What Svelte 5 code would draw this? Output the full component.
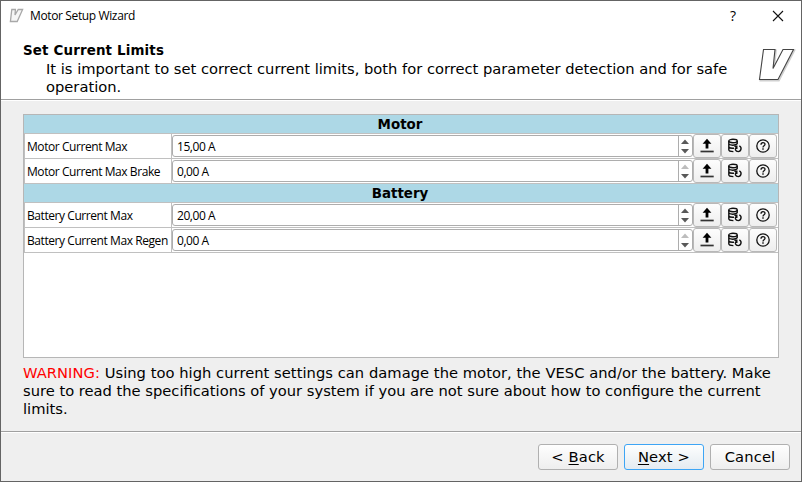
<script>
  const groups = [
    { title: 'Motor', rows: [
      { name: 'Motor Current Max', value: '15,00 A', atMin: false },
      { name: 'Motor Current Max Brake', value: '0,00 A', atMin: true }
    ] },
    { title: 'Battery', rows: [
      { name: 'Battery Current Max', value: '20,00 A', atMin: false },
      { name: 'Battery Current Max Regen', value: '0,00 A', atMin: true }
    ] }
  ];
</script>

<div class="window">
  <header class="titlebar">
    <svg class="mini" width="16" height="16" viewBox="0 0 16 16"><path d="M2.8 1.5H6.4L6 7 9.2 1.5H13.6L8.2 13.5H1.4Z" fill="#f6f6f6" stroke="#a8a8a8" stroke-width="1.3" /></svg>
    <span class="caption">Motor Setup Wizard</span>
    <span class="help">?</span>
    <svg class="close" width="12" height="12" viewBox="0 0 12 12"><path d="M1 1L11 11M11 1L1 11" stroke="#111" stroke-width="1.1" /></svg>
  </header>
  <section class="head">
    <div class="intro">
      <h1>Set Current Limits</h1>
      <p>It is important to set correct current limits, both for correct parameter detection and for safe<br />operation.</p>
    </div>
    <svg class="logo" width="40" height="38" viewBox="0 0 40 38">
      <path d="M6.5 3.5H18L16 22.5 26 3.5H36.5L21 33.5H2.5Z" fill="none" stroke="#d0d0d0" stroke-width="1.8" transform="translate(.9 1)" />
      <path d="M6.5 3.5H18L16 22.5 26 3.5H36.5L21 33.5H2.5Z" fill="#fff" stroke="#444" stroke-width="1.1" />
    </svg>
  </section>
  <main>
    <div class="table">
      {#each groups as g}
        <div class="group">{g.title}</div>
        {#each g.rows as r}
          <div class="row">
            <div class="name">{r.name}</div>
            <div class="spin">
              <span class="value">{r.value}</span>
              <span class="arrows">
                <svg width="14" height="20" viewBox="0 0 14 20">
                  <path d="M3 8L7 3.5 11 8Z" fill={r.atMin ? '#bdbdbd' : '#595959'} />
                  <path d="M3 13L7 17.5 11 13Z" fill="#595959" />
                </svg>
              </span>
            </div>
            <div class="tool"><svg width="16" height="16" viewBox="0 0 16 16"><path d="M8 .8L12.4 5.8H9.4V10.6H6.6V5.8H3.6Z" fill="#000" /><path d="M1.5 13.5H14.7" stroke="#333" stroke-width="1.7" /></svg></div>
            <div class="tool"><svg width="16" height="16" viewBox="0 0 16 16" fill="none" stroke="#111" stroke-width="1.4"><ellipse cx="6" cy="3" rx="4.2" ry="1.7" /><path d="M1.8 3V11.8C1.8 13 3.6 13.6 6.4 13.6M10.2 3V6M1.8 5.8C2.6 7.5 8.5 7.8 10.2 5.8M1.8 8.8C2.6 10.3 5 10.4 7 10.2" /><path d="M12.3 7.8C15.2 9.2 14.3 13.6 11.2 13.6C8.4 13.6 7.5 11 9.2 9.2M7.4 8.3H9.8V11" /></svg></div>
            <div class="tool"><svg width="16" height="16" viewBox="0 0 16 16" fill="none" stroke="#111"><circle cx="8" cy="8" r="6.2" stroke-width="1.3" /><path d="M6 6.7C6 4 10 4.1 10 6.3C10 7.7 8 7.7 8 9.4" stroke-width="1.3" /><path d="M8 10.3V11.7" stroke-width="1.4" /></svg></div>
          </div>
        {/each}
      {/each}
    </div>
    <p class="warning"><span class="first"><em>WARNING:</em> Using too high current settings can damage the motor, the VESC and/or the battery. Make</span><br />sure to read the specifications of your system if you are not sure about how to configure the current<br />limits.</p>
  </main>
  <footer>
    <button>&lt; <u>B</u>ack</button>
    <button class="primary"><u>N</u>ext &gt;</button>
    <button>Cancel</button>
  </footer>
</div>

<style>
  :global(body) { margin: 0; overflow: hidden; }
  .window { box-sizing: border-box; width: 802px; height: 482px; border: 1px solid #646464; background: #efefef; display: flex; flex-direction: column; font: 14.7px/18px "DejaVu Sans", sans-serif; color: #000; white-space: nowrap; }
  .titlebar { height: 30px; background: #fff; display: flex; align-items: center; font: 12px/16px "Open Sans", "Noto Sans", sans-serif; flex: none; }
  .mini { margin-left: 8px; }
  .caption { margin-left: 5px; letter-spacing: -0.37px; }
  .help { margin-left: auto; margin-right: 36px; font-size: 14px; }
  .close { margin-right: 17px; }
  .head { box-sizing: border-box; height: 70px; flex: none; background: #fff; border-bottom: 1px solid #fff; box-shadow: inset 0 -1px #a0a0a0; display: flex; padding: 10px 4px 0 22px; }
  .intro { flex: 1; }
  h1 { font: bold 14.9px/18px "DejaVu Sans Condensed", "DejaVu Sans", sans-serif; font-stretch: condensed; letter-spacing: 0.16px; margin: 0; }
  p { margin: 0; }
  .head p { padding: 1px 0 0 23px; }
  .logo { margin: 5px 0 0; }
  main { flex: 1; padding: 13px 22px 0; }
  .table { box-sizing: border-box; width: 756px; height: 244px; border: 1px solid #b6b6b6; background: #fff; }
  .group { height: 18px; background: #add8e6; border-bottom: 1px solid #c0c0c0; padding-right: 2px; font: bold 14.9px/18px "DejaVu Sans Condensed", "DejaVu Sans", sans-serif; font-stretch: condensed; text-align: center; }
  .row { box-sizing: border-box; height: 25px; border-bottom: 1px solid #c0c0c0; border-left: 1px solid #c0c0c0; display: flex; align-items: center; }
  .name { box-sizing: border-box; width: 147px; height: 24px; border-right: 1px solid #c0c0c0; padding-left: 2px; font: 12px/25px "Open Sans", "Noto Sans", sans-serif; letter-spacing: -0.43px; }
  .spin { box-sizing: border-box; width: 521px; height: 22px; border: 1px solid #adadad; border-radius: 3px; display: flex; justify-content: space-between; font: 12px/20px "Open Sans", "Noto Sans", sans-serif; }
  .value { padding: 1px 0 0 4px; letter-spacing: -0.45px; }
  .arrows { width: 13px; border-left: 1px solid #adadad; }
  .arrows svg { display: block; margin-left: -1px; }
  .tool { box-sizing: border-box; width: 28px; height: 24px; border: 1px solid #b8b8b8; border-radius: 3px; background: linear-gradient(#fdfdfd, #eee); display: flex; align-items: center; justify-content: center; }
  .warning { padding-top: 6px; }
  .first { letter-spacing: 0.04px; }
  em { font-style: normal; color: #f00; }
  footer { box-sizing: border-box; height: 50px; flex: none; border-top: 1px solid #a0a0a0; box-shadow: inset 0 1px #fff; display: flex; justify-content: flex-end; gap: 6px; padding: 12px 11px 0 0; }
  button { box-sizing: border-box; width: 80px; height: 26px; border: 1px solid #b0b0b0; border-radius: 3px; background: linear-gradient(#fefefe, #eee); padding: 0; font: 14.7px/24px "DejaVu Sans", sans-serif; letter-spacing: 0.15px; color: #000; }
  button.primary { border-color: #3da5f5; background: linear-gradient(#fdfefe, #e4ebf1); }
  u { text-underline-offset: 2px; text-decoration-thickness: 1px; }
</style>
